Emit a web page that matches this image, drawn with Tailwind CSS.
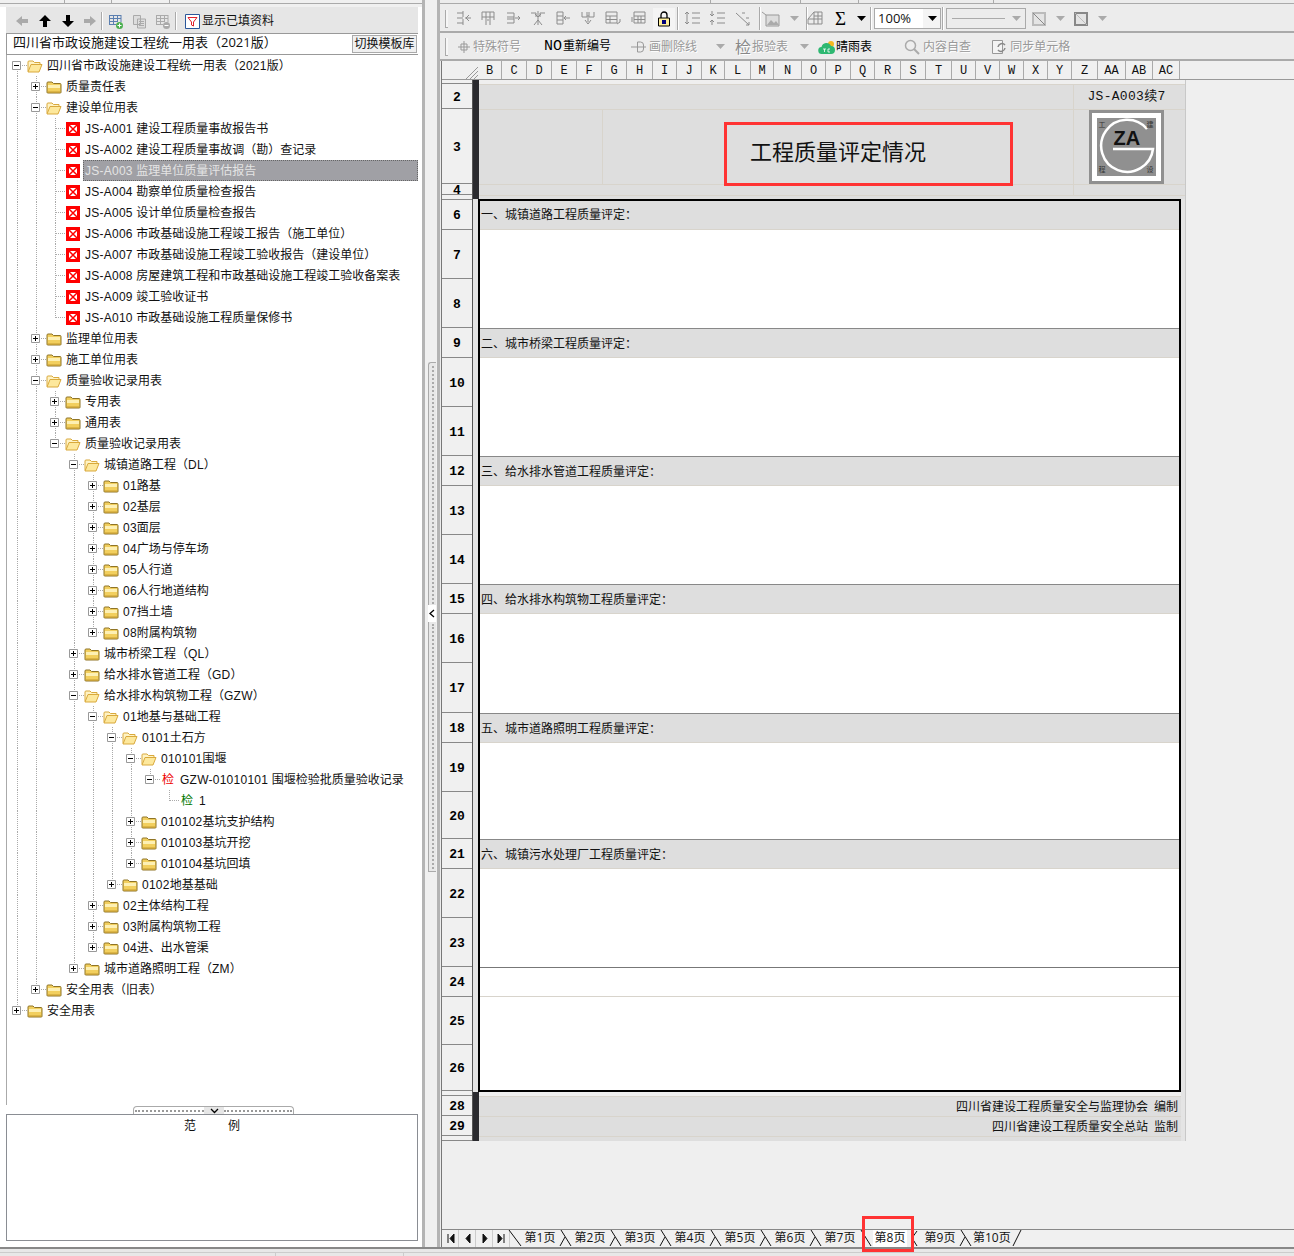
<!DOCTYPE html>
<html lang="zh-CN">
<head>
    <meta charset="UTF-8">
    <title>工程质量评定情况</title>
    <script src="https://cdn.jsdelivr.net/npm/@tailwindcss/browser@4"></script>
</head>
<body class="bg-[#f0f0f0] text-[#111] text-[12px] font-['Open_Sans','Noto_Sans_CJK_SC',sans-serif] overflow-hidden">
<div class="w-[1294px] h-[1256px] flex flex-col overflow-hidden">
    <div class="h-[1247px] flex">
        <!-- left panel -->
        <div class="w-[425px] pl-[7px] pr-[4px] flex flex-col bg-white border-r-[3px] border-[#b4b4b4]">
            <div class="-ml-[7px] -mr-[4px] h-[7px] bg-[#f0f0f0] flex">
                <div class="w-[65px] h-[4px] border-r border-b border-[#aaa]"></div>
                <div class="w-[47px] h-[4px] border-r border-b border-[#aaa]"></div>
                <div class="w-[58px] h-[4px] border-r border-b border-[#aaa]"></div>
                <div class="flex-1 h-[4px] border-b border-[#aaa]"></div>
            </div>
            <div class="h-[26px] pt-[2px] -ml-[1px] bg-[#e6e6e6] flex items-center">
                <svg class="ml-[9px] w-[14px] h-[14px]" viewBox="0 0 14 14"><path d="M1 7l6-5v3h6v4H7v3z" fill="#aaa"/></svg>
                <svg class="ml-[9px] w-[14px] h-[14px]" viewBox="0 0 14 14"><path d="M7 1l6 6H9v6H5V7H1z" fill="#000"/></svg>
                <svg class="ml-[9px] w-[14px] h-[14px]" viewBox="0 0 14 14"><path d="M7 13l6-6H9V1H5v6H1z" fill="#000"/></svg>
                <svg class="ml-[8px] w-[14px] h-[14px]" viewBox="0 0 14 14"><path d="M13 7L7 2v3H1v4h6v3z" fill="#aaa"/></svg>
                <div class="ml-[4px] w-[2px] h-[18px] border-l border-[#aaa] bg-white"></div>
                <svg class="ml-[5px] w-[15px] h-[15px]" viewBox="0 0 15 15"><path d="M1 1.500h12M1 4.500h12M1 7.500h9M1 10.500h7M1.500 1v10M5.500 1v10M9.500 1v7M13 1v7" stroke="#5b7fb0" fill="none"/><circle cx="11.500" cy="11.500" r="3.500" fill="#4caf50"/><path d="M11.500 9.500v4M9.500 11.500h4" stroke="#fff"/></svg>
                <svg class="ml-[9px] w-[15px] h-[15px]" viewBox="0 0 15 15"><path d="M1.500 1.500h7v9h-7z M5.500 5h8v9h-8z" fill="#ddd" stroke="#aaa"/><path d="M7 7.500h5M7 9.500h5M7 11.500h5" stroke="#aaa"/></svg>
                <svg class="ml-[8px] w-[15px] h-[15px]" viewBox="0 0 15 15"><path d="M1 1.500h12M1 4.500h12M1 7.500h9M1 10.500h7M1.500 1v10M5.500 1v10M9.500 1v7M13 1v7" stroke="#aaa" fill="none"/><circle cx="11.500" cy="11.500" r="3.500" fill="#aaa"/><path d="M9.500 11.500h4" stroke="#fff"/></svg>
                <div class="ml-[5px] w-[2px] h-[18px] border-l border-[#aaa] bg-white"></div>
                <svg class="ml-[8px] w-[15px] h-[15px]" viewBox="0 0 15 15"><path d="M.500.500h14v14H.500z" fill="#fff" stroke="#2b579a"/><path d="M3 3.500h9L8.500 8v4l-2-1V8z" fill="#fff" stroke="#e0202a"/></svg>
                <span class="ml-[2px]">显示已填资料</span>
            </div>
            <div class="h-[22px] flex -ml-[1px] bg-white border-t border-b border-[#999] border-l border-l-[#999]">
                <div class="flex-1 pl-[6px] text-[13px] leading-[17px] whitespace-nowrap">四川省市政设施建设工程统一用表（2021版）</div>
                <div class="w-[65px] mt-[1px] mb-[1px] mr-[1px] bg-[#f0f0f0] border border-[#aaa] text-center text-[12px] leading-[16px] whitespace-nowrap">切换模板库</div>
            </div>
            <div id="tree" class="h-[1050px] pt-0 border-l border-[#aaa] -ml-[1px]"></div>
            <div class="h-[9px] flex justify-center pl-[2px]">
                <div class="mt-[1px] w-[161px] h-[8px] bg-white border border-b-0 border-[#aaa] rounded-t-[4px] flex items-center">
                    <div class="w-[69px] h-[2px] ml-[1px] border-t-2 border-dotted border-[#999]"></div>
                    <div class="w-[20px] h-[8px] bg-[#e6e6e6] flex items-center justify-center"><svg class="w-[9px] h-[6px]" viewBox="0 0 9 6"><path d="M1 1l3.500 3.500L8 1" stroke="#000" stroke-width="1.300" fill="none"/></svg></div>
                    <div class="w-[68px] h-[2px] border-t-2 border-dotted border-[#999]"></div>
                </div>
            </div>
            <div class="h-[127px] border border-[#8a8d93] -ml-[1px] w-[412px] text-center leading-[22px]">范<span class="inline-block w-[32px]"></span>例</div>
        </div>
        <!-- splitter -->
        <div class="w-[12px] bg-[#f0f0f0] pt-[362px] pl-[3px]">
            <div class="w-[8px] h-[243px] bg-[#e8e8e8] border-l border-t border-[#aaa] rounded-tl-[3px] flex justify-center">
                <div class="w-0 h-[238px] mt-[3px] border-l-2 border-dotted border-[#aaa]"></div>
            </div>
            <div class="w-[8px] h-[17px] bg-white flex items-center justify-center"><svg class="w-[6px] h-[9px]" viewBox="0 0 6 9"><path d="M5 1L1 4.500 5 8" stroke="#000" stroke-width="1.300" fill="none"/></svg></div>
            <div class="w-[8px] h-[250px] bg-[#e8e8e8] border-l border-b border-[#aaa] flex justify-center">
                <div class="w-0 h-[245px] mt-[2px] border-l-2 border-dotted border-[#aaa]"></div>
            </div>
        </div>
        <!-- right panel -->
        <div class="flex-1 flex flex-col min-w-0 bg-[#ececec] border-l-[3px] border-[#b4b4b4]">
            <div class="h-[6px] flex">
                <div class="w-[271px] h-[4px] border-r border-b border-[#aaa]"></div>
                <div class="w-[90px] h-[4px] border-r border-b border-[#aaa]"></div>
                <div class="w-[58px] h-[4px] border-r border-b border-[#aaa]"></div>
                <div class="w-[135px] h-[4px] border-r border-b border-[#aaa]"></div>
                <div class="flex-1 h-[4px] border-b border-[#aaa]"></div>
            </div>
            <!-- toolbar 1 -->
            <div id="bar1" class="h-[27px] flex items-center border-b-2 border-[#aaa]"></div>
            <!-- toolbar 2 -->
            <div class="h-[28px] pt-[2px] flex items-center border-b-2 border-[#aaa] whitespace-nowrap text-[#999] [text-shadow:1px_1px_0_#fff]">
                <div class="ml-[5px] w-[3px] h-[18px] border-l border-b border-[#aaa] bg-white/50"></div>
                <svg class="ml-[9px] w-[14px] h-[14px]" viewBox="0 0 14 14"><path d="M1 7h12M7 1v12M4 4h6v6H4z" stroke="#999" fill="none"/></svg>
                <span class="ml-[2px]">特殊符号</span>
                <span class="ml-[23px] text-black [text-shadow:none]"><span class="font-['Liberation_Mono'] text-[15px]">NO</span><span class="ml-[1px]">重新编号</span></span>
                <svg class="ml-[20px] w-[15px] h-[14px]" viewBox="0 0 15 14"><path d="M0 7h15M6.500 2v10M6.500 2h3a3 3 0 0 1 3 3v4a3 3 0 0 1-3 3h-3" stroke="#999" fill="none"/></svg>
                <span class="ml-[3px]">画删除线</span>
                <svg class="ml-[19px] w-[9px] h-[6px]" viewBox="0 0 9 6"><path d="M0 0h9L4.500 5z" fill="#aaa"/></svg>
                <span class="ml-[10px] text-[16px] text-[#888]">检</span>
                <span class="ml-[1px]">报验表</span>
                <svg class="ml-[12px] w-[9px] h-[6px]" viewBox="0 0 9 6"><path d="M0 0h9L4.500 5z" fill="#aaa"/></svg>
                <svg class="ml-[9px] w-[17px] h-[15px]" viewBox="0 0 17 15"><circle cx="13" cy="4" r="3" fill="#f5b81f"/><path d="M4 14a3.500 3.500 0 0 1-.500-7A5 5 0 0 1 13 6a4 4 0 0 1 0 8z" fill="#2eb872"/><path d="M5 9h3M6.500 9v3M12 9h-2v3h2" stroke="#fff" stroke-width=".8" fill="none"/></svg>
                <span class="ml-[1px] text-black [text-shadow:none]">晴雨表</span>
                <svg class="ml-[32px] w-[16px] h-[16px]" viewBox="0 0 16 16"><circle cx="6.500" cy="6.500" r="5" fill="#eee" stroke="#aaa" stroke-width="1.500"/><path d="M10 10l5 5" stroke="#aaa" stroke-width="2"/></svg>
                <span class="ml-[3px]">内容自查</span>
                <svg class="ml-[20px] w-[16px] h-[16px]" viewBox="0 0 16 16"><path d="M1.500 1.500h10v13h-10z" fill="#f4f4f4" stroke="#999"/><path d="M7 8a4 4 0 0 1 7-2M14 9a4 4 0 0 1-7 2" stroke="#888" stroke-width="1.500" fill="none"/></svg>
                <span class="ml-[3px]">同步单元格</span>
            </div>
            <!-- sheet frame -->
            <div class="flex-1 ml-[1px] border-l border-[#777] bg-[#efefef] flex flex-col min-h-0">
                <div id="cols" class="h-[19px] flex bg-[#f0f0f0] border-b border-[#999] font-['Liberation_Mono',monospace]"></div>
                <div class="flex-1 flex items-start min-h-0">
                    <div id="rowHead" class="w-[31px] border-r border-[#555] bg-[#f0f0f0] font-['Liberation_Mono',monospace] font-bold text-[13px] text-black"></div>
                    <div class="w-[713px] flex flex-col">
                        <div class="border-r border-[#c8c8c8] bg-[#e4e4e4]">
                            <div class="border-l-[6px] border-[#2a2a2e]">
                                <div class="h-[4px] bg-[#efefef]"></div>
                                <div class="h-[25px] flex bg-[#dedede] border-t border-[#d8d4cc]">
                                    <div class="flex-1"></div>
                                    <div class="w-[108px] mr-[4px] pr-[2px] border-l border-[#d8d4cc] text-center text-[13px] leading-[24px] tracking-[.3px] font-['Liberation_Mono','Noto_Sans_CJK_SC',monospace]">JS-A003续7</div>
                                </div>
                                <div class="h-[75px] flex bg-[#dedede] border-t border-[#d8d4cc]">
                                    <div class="w-[124px] border-r border-[#d8d4cc]"></div>
                                    <div class="w-[470px] pl-[147px] relative text-[22px] leading-[82px] whitespace-nowrap">工程质量评定情况
                                        <div class="absolute left-[121px] top-[12px] w-[289px] h-[64px] border-[3px] border-[#f33]"></div>
                                    </div>
                                    <div class="w-[108px] mr-[4px] border-l border-[#d8d4cc] flex justify-center">
                                        <!-- logo -->
                                        <div class="relative w-[75px] h-[74px] -ml-[3px] bg-[#909090] border-[3px] border-[#909090]">
                                            <div class="absolute inset-0 border-[5px] border-white"></div>
                                            <svg class="absolute left-[5px] top-[5px] w-[59px] h-[58px]" viewBox="0 0 59 58"><path d="M50 11A26 26 0 1 0 56 31H16" stroke="#fff" stroke-width="2.500" fill="none"/></svg>
                                            <span class="absolute left-[22px] top-[11px] text-[20px] leading-[28px] font-bold text-[#111] font-['Liberation_Sans']">ZA</span>
                                            <span class="absolute left-[7px] top-[7px] text-[7px] leading-[9px] text-[#333]">工</span>
                                            <span class="absolute right-[7px] top-[7px] text-[7px] leading-[9px] text-[#333]">建</span>
                                            <span class="absolute left-[7px] bottom-[7px] text-[7px] leading-[9px] text-[#333]">程</span>
                                            <span class="absolute right-[7px] bottom-[7px] text-[7px] leading-[9px] text-[#333]">设</span>
                                        </div>
                                    </div>
                                </div>
                                <div class="h-[11px] flex bg-[#dedede] border-t border-[#d8d4cc]">
                                    <div class="flex-1"></div>
                                    <div class="w-[108px] mr-[4px] border-l border-[#d8d4cc]"></div>
                                </div>
                                <div class="h-[4px] bg-[#dedede] border-t border-[#d8d4cc]"></div>
                            </div>
                        </div>
                        <div class="border-r border-[#c8c8c8] bg-[#e4e4e4] pr-[4px]">
                            <div id="sheet" class="ml-[5px] h-[893px] bg-white border-2 border-black"></div>
                        </div>
                        <div class="border-r border-[#c8c8c8] bg-[#e4e4e4]">
                            <div class="border-l-[6px] border-[#2a2a2e] mr-[4px] bg-[#dedede]">
                                <div class="h-[4px] bg-[#efefef]"></div>
                                <div class="h-[20px] border-t border-[#d8d4cc] text-right pr-[3px] leading-[19px]">四川省建设工程质量安全与监理协会<span class="inline-block w-[6px]"></span>编制</div>
                                <div class="h-[20px] border-t border-[#d8d4cc] text-right pr-[3px] leading-[19px]">四川省建设工程质量安全总站<span class="inline-block w-[6px]"></span>监制</div>
                                <div class="h-[5px] border-t border-[#d8d4cc]"></div>
                            </div>
                        </div>
                    </div>
                </div>
                <!-- page tabs -->
                <div id="tabs" class="h-[18px] flex border-t border-[#888] bg-[#f0f0f0] relative"></div>
            </div>
        </div>
    </div>
    <div class="flex-1 border-t-2 border-[#888] bg-[#e8e8e8] flex">
        <div class="w-[276px] mt-[3px] border-t border-r border-[#ccc]"></div>
        <div class="w-[128px] mt-[3px] border-t border-r border-[#ccc]"></div>
        <div class="flex-1 mt-[3px] border-t border-[#ccc]"></div>
    </div>
</div>

<script>
    // [depth, kind, text]  o open folder, c closed folder, x form, r/g inspection lot
    const treeRows = [
        [0,'o','四川省市政设施建设工程统一用表（2021版）'],
        [1,'c','质量责任表'],
        [1,'o','建设单位用表'],
        [2,'x','JS-A001 建设工程质量事故报告书'],
        [2,'x','JS-A002 建设工程质量事故调（勘）查记录'],
        [2,'s','JS-A003 监理单位质量评估报告'],
        [2,'x','JS-A004 勘察单位质量检查报告'],
        [2,'x','JS-A005 设计单位质量检查报告'],
        [2,'x','JS-A006 市政基础设施工程竣工报告（施工单位）'],
        [2,'x','JS-A007 市政基础设施工程竣工验收报告（建设单位）'],
        [2,'x','JS-A008 房屋建筑工程和市政基础设施工程竣工验收备案表'],
        [2,'x','JS-A009 竣工验收证书'],
        [2,'x','JS-A010 市政基础设施工程质量保修书'],
        [1,'c','监理单位用表'],
        [1,'c','施工单位用表'],
        [1,'o','质量验收记录用表'],
        [2,'c','专用表'],
        [2,'c','通用表'],
        [2,'o','质量验收记录用表'],
        [3,'o','城镇道路工程（DL）'],
        [4,'c','01路基'],
        [4,'c','02基层'],
        [4,'c','03面层'],
        [4,'c','04广场与停车场'],
        [4,'c','05人行道'],
        [4,'c','06人行地道结构'],
        [4,'c','07挡土墙'],
        [4,'c','08附属构筑物'],
        [3,'c','城市桥梁工程（QL）'],
        [3,'c','给水排水管道工程（GD）'],
        [3,'o','给水排水构筑物工程（GZW）'],
        [4,'o','01地基与基础工程'],
        [5,'o','0101土石方'],
        [6,'o','010101围堰'],
        [7,'r','GZW-01010101 围堰检验批质量验收记录'],
        [8,'g','1'],
        [6,'c','010102基坑支护结构'],
        [6,'c','010103基坑开挖'],
        [6,'c','010104基坑回填'],
        [5,'c','0102地基基础'],
        [4,'c','02主体结构工程'],
        [4,'c','03附属构筑物工程'],
        [4,'c','04进、出水管渠'],
        [3,'c','城市道路照明工程（ZM）'],
        [1,'c','安全用表（旧表）'],
        [0,'c','安全用表'],
    ];

    const closedFolder = `<svg class="w-[16px] h-[14px]" viewBox="0 0 16 14"><path d="M1 12.500V3q0-1 1-1h4l1.500 1.500H14q1 0 1 1v8q0 .5-1 .5H2q-1 0-1-.5z" fill="#f2cf5e" stroke="#8f7426"/><path d="M2 5h12v3H2z" fill="#fdf0b4"/><path d="M2 12h12" stroke="#c79a2e"/></svg>`;
    const openFolder = `<svg class="w-[16px] h-[14px]" viewBox="0 0 16 14"><path d="M1 12.500V3q0-1 1-1h4l1.500 1.500H13v2" fill="#fff3c4" stroke="#d9a93c"/><path d="M1 13l3-7.500h11L12 13z" fill="#fde89c" stroke="#d9a93c"/></svg>`;
    const formIcon = `<svg class="w-[14px] h-[14px]" viewBox="0 0 14 14"><path d="M0 0h14v14H0z" fill="#f00"/><path d="M3 3h8v8H3z" fill="#fff"/><path d="M3 3l8 8M11 3l-3.500 3.500M3 11l3.500-3.500" stroke="#f00" stroke-width="1.500"/></svg>`;

    function hasLaterSibling(i, level) {
        for (let j = i + 1; j < treeRows.length; j++) {
            if (treeRows[j][0] < level) return false;
            if (treeRows[j][0] === level) return true;
        }
        return false;
    }

    // latin runs sit wider than the CJK font's own latin
    function latin(text) {
        return text.replace(/[A-Za-z0-9\- ]+/g, m => `<span class="font-['Liberation_Sans'] tracking-[.25px]">${m}</span>`);
    }

    function renderTree() {
        let html = '';
        treeRows.forEach(([depth, kind, text], i) => {
            const x = 10 + 19 * depth;
            let guides = '';
            for (let l = 0; l < depth; l++) {
                if (hasLaterSibling(i, l)) {
                    guides += `<span class="absolute top-0 h-[21px] border-l border-dotted border-[#aaa]" style="left:${10 + 19 * l}px"></span>`;
                }
            }
            const later = hasLaterSibling(i, depth);
            if (i > 0) {
                guides += `<span class="absolute top-0 border-l border-dotted border-[#aaa] ${later ? 'h-[21px]' : 'h-[11px]'}" style="left:${x}px"></span>`;
            } else {
                guides += `<span class="absolute top-[10px] h-[11px] border-l border-dotted border-[#aaa]" style="left:${x}px"></span>`;
            }
            guides += `<span class="absolute top-[10px] w-[10px] border-t border-dotted border-[#aaa]" style="left:${x}px"></span>`;

            const openable = kind === 'o' || kind === 'c' || kind === 'r';
            let box = '<span class="w-[9px] h-[9px]"></span>';
            if (openable) {
                box = `<svg class="relative w-[9px] h-[9px] bg-white" viewBox="0 0 9 9"><path d="M.500.500h8v8h-8z" fill="#fff" stroke="#999"/><path d="M2 4.500h5${kind === 'c' ? 'M4.500 2v5' : ''}" stroke="#000"/></svg>`;
            }
            let icon = closedFolder;
            if (kind === 'o') icon = openFolder;
            if (kind === 'x' || kind === 's') icon = formIcon;
            if (kind === 'r') icon = '<span class="text-[#e00] bg-white">检</span>';
            if (kind === 'g') icon = '<span class="text-[#070] bg-white">检</span>';

            const label = kind === 's'
                ? `<span class="flex-1 -ml-[2px] pl-[1px] h-[21px] leading-[19px] bg-[#a0a0a5] text-[#e4e4e4] border border-dotted border-[#666]">${latin(text)}</span>`
                : `<span>${latin(text)}</span>`;

            html += `<div class="relative h-[21px] flex items-center whitespace-nowrap" style="padding-left:${5 + 19 * depth}px">${guides}
                ${box}
                <span class="relative ml-[6px] w-[16px] flex justify-center items-center">${icon}</span>
                <span class="relative ml-[4px] flex-1 flex items-center">${label}</span>
            </div>`;
        });
        document.getElementById('tree').innerHTML = html;
    }

    // groove-and-icon toolbar; icons are simple line drawings
    const barIcons = [
        'M2 3h6M8 1v6M2 8h6M8 9v6M2 13h6M10 8h6M11 8l3-3M11 8l3 3',
        'M2 2h12v5H2zM2 7v3M14 7v3M6 2v5M10 2v5M6 7v8M10 7v8M8 11v-2',
        'M2 3h7v4H2M9 7v2M2 9h7v4H2M10 8h5M13 6l2 2-2 2',
        'M1 3h5v4M15 3h-5v4M8 1v14M4 15l4-5 4 5M8 7l-3-3M8 7l3-3',
        'M2 2h6v12H2zM2 6h6M2 10h6M15 8H9M11 6L9 8l2 2',
        'M2 2v5h5V2M14 2v5H9V2M8 5v7M5 10l3 4 3-4',
        'M1 2h11v4H1zM1 6v7h11V6M1 9.500h11M5 6v7M15 9v3l-3 2',
        'M4 2h11v4H4zM15 6v7H4V6M4 9.500h11M8 6v7M11 6v7M2 7v5',
    ];

    function grooveIcon(path) {
        return `<span class="w-[25px] flex justify-center"><svg class="w-[17px] h-[17px]" viewBox="0 0 17 17"><path d="${path}" stroke="#8c8c8c" fill="none"/></svg></span>`;
    }

    function renderBar1() {
        const sep = '<span class="block w-[2px] h-[23px] border-l border-[#aaa] bg-white"></span>';
        const arrow = (ml, color) => `<svg class="w-[9px] h-[6px]" style="margin-left:${ml}px" viewBox="0 0 9 6"><path d="M0 0h9L4.500 5z" fill="${color}"/></svg>`;
        document.getElementById('bar1').innerHTML = `
            <span class="ml-[5px] mr-[2px] w-[3px] h-[18px] border-l border-b border-[#aaa] bg-white/50"></span>
            <span class="ml-[1px] flex">${barIcons.map(grooveIcon).join('')}</span>
            <span class="ml-[2px] w-[22px] h-[22px] flex items-center justify-center bg-[#f4f4f4]"><svg class="w-[14px] h-[16px]" viewBox="0 0 14 16"><path d="M4 7V4a3 3 0 0 1 6 0v3" stroke="#000" stroke-width="1.300" fill="none"/><path d="M1.500 7h11v8h-11z" fill="#ffef9c" stroke="#000"/><path d="M5 9h4v4H5z" fill="#00007a"/></svg></span>
            <span class="ml-[2px]">${sep}</span>
            <span class="ml-[1px] flex">
            ${grooveIcon('M3 2v12M1 4l2-2 2 2M1 12l2 2 2-2M8 3h8M8 8h8M8 13h8')}
            ${grooveIcon('M3 1v5M1 4l2 2 2-2M3 15v-5M1 12l2-2 2 2M8 3h8M8 8h8M8 13h8')}
            ${grooveIcon('M2 3l13 12M12 15l3 0 0-3M8 3h3M12 8h3')}
            </span>
            <span class="ml-[4px]">${sep}</span>
            <span class="ml-[0px] w-[20px] flex justify-center"><svg class="w-[20px] h-[16px]" viewBox="0 0 20 16"><path d="M1 1l4 3h13v11H5V4" fill="#ddd" stroke="#999"/><path d="M6 14l4-5 3 3 2-2 3 4z" fill="#aaa"/></svg></span>
            ${arrow(9, '#aaa')}
            <span class="ml-[7px]">${sep}</span>
            <span class="-ml-[6px]">${grooveIcon('M2 9l6-7h8v12H2zM2 9h14M8 2v12M12 2v12M8 6h8')}</span>
            <span class="ml-[8px] text-[19px] leading-[20px] font-['Liberation_Serif'] text-black">Σ</span>
            ${arrow(11, '#000')}
            <span class="ml-[4px]">${sep}</span>
            <span class="ml-[2px] w-[67px] h-[21px] bg-[#f4f4f4] border border-[#aaa] flex items-center">
                <span class="bg-white w-[48px] h-[19px] pl-[3px] text-[13px] leading-[19px]">100%</span>
                ${arrow(5, '#000')}
            </span>
            <span class="ml-[1px]">${sep}</span>
            <span class="ml-[2px] w-[80px] h-[21px] border border-[#aaa] flex items-center">
                <span class="ml-[5px] w-[53px] border-t border-[#aaa]"></span>
                ${arrow(7, '#aaa')}
            </span>
            <svg class="ml-[6px] w-[14px] h-[14px]" viewBox="0 0 14 14"><path d="M1 1h12v12H1z" fill="#e4e4e4" stroke="#bbb" stroke-width="2"/><path d="M1 1l12 12" stroke="#888"/></svg>
            ${arrow(10, '#aaa')}
            <svg class="ml-[9px] w-[14px] h-[14px]" viewBox="0 0 14 14"><path d="M1 1h12v12H1z" fill="#e4e4e4" stroke="#888" stroke-width="2"/><path d="M1 1l12 12" stroke="#bbb"/></svg>
            ${arrow(10, '#aaa')}
        `;
    }

    function renderColumns() {
        const edges = [479,503,528,553,578,603,628,654,678,703,726,752,775,803,827,852,876,902,927,953,977,1001,1025,1049,1073,1099,1127,1154,1181];
        const names = 'B C D E F G H I J K L M N O P Q R S T U V W X Y Z AA AB AC'.split(' ');
        let html = `<div class="w-[36px] flex justify-end items-end"><svg class="w-[12px] h-[12px]" viewBox="0 0 12 12"><path d="M0 12L12 0M4 12l8-8M8 12l4-4" stroke="#999" fill="none"/></svg></div>`;
        names.forEach((name, i) => {
            html += `<div class="border-r border-[#aaa] text-center leading-[20px] bg-[#f0f0f0]" style="width:${edges[i + 1] - edges[i]}px">${name}</div>`;
        });
        document.getElementById('cols').innerHTML = html;
    }

    function renderRowHeads() {
        const rows = [['',4],[2,25],[3,75],[4,11],['',5],[6,30],[7,49],[8,49],[9,30],[10,49],[11,49],[12,30],[13,49],[14,49],[15,30],[16,49],[17,50],[18,30],[19,49],[20,47],[21,30],[22,49],[23,49],[24,30],[25,48],[26,46],['',5],[28,20],[29,20],['',5]];
        document.getElementById('rowHead').innerHTML = rows.map(([label, h]) =>
            `<div class="border-b border-[#888] text-center overflow-hidden" style="height:${h}px;line-height:${h + 2}px">${label}</div>`
        ).join('');
    }

    function renderSheet() {
        const rows = [
            ['一、城镇道路工程质量评定：',29],[0,98],
            ['二、城市桥梁工程质量评定：',30],[0,98],
            ['三、给水排水管道工程质量评定：',30],[0,98],
            ['四、给水排水构筑物工程质量评定：',30],[0,99],
            ['五、城市道路照明工程质量评定：',30],[0,96],
            ['六、城镇污水处理厂工程质量评定：',30],[0,98],
            ['',30],[0,93],
        ];
        document.getElementById('sheet').innerHTML = rows.map(([text, h], i) => {
            if (text === 0) return `<div style="height:${h}px"></div>`;
            if (text === '') return `<div class="border-t border-[#777] border-b border-b-[#d8d4cc]" style="height:${h}px"></div>`;
            return `<div class="bg-[#dedede] pl-[1px] border-b border-[#d8d4cc] ${i ? 'border-t border-t-[#888]' : ''}" style="height:${h}px;line-height:${h - 1}px">${text}</div>`;
        }).join('');
    }

    function renderTabs() {
        const nav = ['M3 2v9M9 2L5 6.500 9 11z','M8 2L4 6.500 8 11z','M4 2l4 4.500L4 11z','M8 2v9M2 2l4 4.500L2 11z'];
        let html = nav.map(d =>
            `<div class="w-[17px] h-[17px] border-r border-[#ccc] flex items-center justify-center"><svg class="w-[11px] h-[13px]" viewBox="0 0 11 13"><path d="${d}" fill="#111" stroke="#111"/></svg></div>`
        ).join('');
        const seps = {
            first: 'M2 0L14 16',
            mid: 'M4 0L14 16M8 7L3 16',
            before: 'M4 0L14 16',
            after: 'M10 1L5 8L10 16',
            last: 'M11 0L3 16',
        };
        const sep = d => `<svg class="w-[16px] h-[17px] shrink-0" viewBox="0 0 16 17"><path d="${d}" stroke="#111" fill="none"/></svg>`;
        html += '<div class="-ml-[3px]"></div>' + sep(seps.first);
        for (let p = 1; p <= 10; p++) {
            html += `<div class="${p === 8 ? 'bg-white' : ''} leading-[16px] text-center whitespace-nowrap ${p === 10 ? 'w-[37px]' : 'w-[34px]'}">第${p}页</div>`;
            if (p === 10) html += sep(seps.last);
            else if (p === 7) html += sep(seps.before);
            else if (p === 8) html += sep(seps.after);
            else html += sep(seps.mid);
        }
        html += '<div class="absolute left-[420px] -top-[14px] w-[52px] h-[36px] border-[3px] border-[#f33]"></div>';
        document.getElementById('tabs').innerHTML = html;
    }

    renderTree();
    renderBar1();
    renderColumns();
    renderRowHeads();
    renderSheet();
    renderTabs();
</script>
</body>
</html>
